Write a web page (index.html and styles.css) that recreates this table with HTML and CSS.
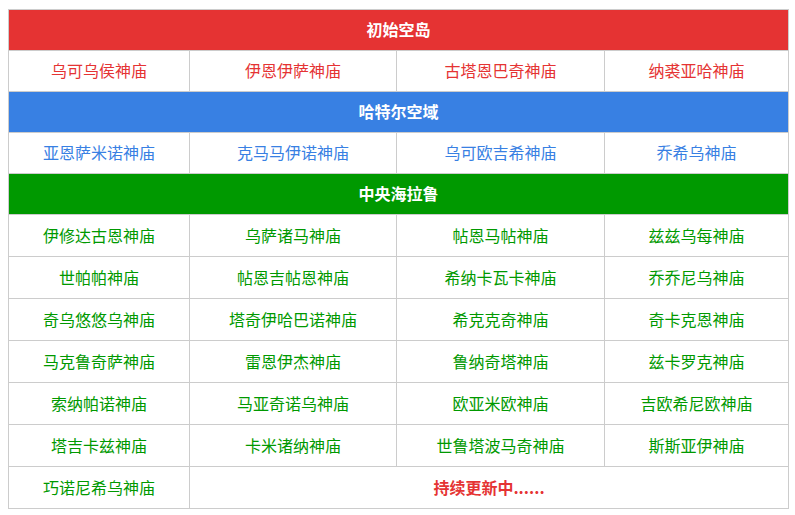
FILE: index.html
```html
<!DOCTYPE html>
<html lang="zh">
<head>
<meta charset="utf-8">
<link rel="stylesheet" href="styles.css">
</head>
<body>
<table class="shrines">
  <colgroup>
    <col class="c1"><col class="c2"><col class="c3"><col class="c4">
  </colgroup>
  <tbody>
    <tr class="head red-bg"><th colspan="4">初始空岛</th></tr>
    <tr class="row red">
      <td>乌可乌侯神庙</td><td>伊恩伊萨神庙</td><td>古塔恩巴奇神庙</td><td>纳裘亚哈神庙</td>
    </tr>
    <tr class="head blue-bg"><th colspan="4">哈特尔空域</th></tr>
    <tr class="row blue">
      <td>亚恩萨米诺神庙</td><td>克马马伊诺神庙</td><td>乌可欧吉希神庙</td><td>乔希乌神庙</td>
    </tr>
    <tr class="head green-bg"><th colspan="4">中央海拉鲁</th></tr>
    <tr class="row tall green">
      <td>伊修达古恩神庙</td><td>乌萨诸马神庙</td><td>帖恩马帖神庙</td><td>兹兹乌每神庙</td>
    </tr>
    <tr class="row tall green">
      <td>世帕帕神庙</td><td>帖恩吉帖恩神庙</td><td>希纳卡瓦卡神庙</td><td>乔乔尼乌神庙</td>
    </tr>
    <tr class="row tall green">
      <td>奇乌悠悠乌神庙</td><td>塔奇伊哈巴诺神庙</td><td>希克克奇神庙</td><td>奇卡克恩神庙</td>
    </tr>
    <tr class="row tall green">
      <td>马克鲁奇萨神庙</td><td>雷恩伊杰神庙</td><td>鲁纳奇塔神庙</td><td>兹卡罗克神庙</td>
    </tr>
    <tr class="row tall green">
      <td>索纳帕诺神庙</td><td>马亚奇诺乌神庙</td><td>欧亚米欧神庙</td><td>吉欧希尼欧神庙</td>
    </tr>
    <tr class="row tall green">
      <td>塔吉卡兹神庙</td><td>卡米诸纳神庙</td><td>世鲁塔波马奇神庙</td><td>斯斯亚伊神庙</td>
    </tr>
    <tr class="row tall green">
      <td>巧诺尼希乌神庙</td><td colspan="3" class="more">持续更新中......</td>
    </tr>
  </tbody>
</table>
</body>
</html>
```
FILE: styles.css
```css
html, body {
  margin: 0;
  padding: 0;
  background: #ffffff;
}
body {
  padding: 9px 0 0 8px;
  font-family: "Noto Sans CJK SC", "Microsoft YaHei", sans-serif;
  font-size: 16px;
}
.shrines {
  border-collapse: collapse;
  table-layout: fixed;
  width: 780px;
}
.c1 { width: 181px; }
.c2 { width: 207px; }
.c3 { width: 208px; }
.c4 { width: 184px; }
.shrines th,
.shrines td {
  border: 1px solid #cccccc;
  text-align: center;
  vertical-align: middle;
  padding: 0 0 2px;
  line-height: 20px;
  white-space: nowrap;
}
.head th {
  height: 38px;
  color: #ffffff;
  font-weight: bold;
  font-size: 16px;
}
.row td { height: 38px; }
.row.tall td { height: 39px; }
.red-bg th { background: #e53333; }
.blue-bg th { background: #3880e3; }
.green-bg th { background: #009900; }
.red td { color: #e53333; }
.blue td { color: #3880e3; }
.green td { color: #009900; }
.green td.more {
  color: #e53333;
  font-weight: bold;
}
```
